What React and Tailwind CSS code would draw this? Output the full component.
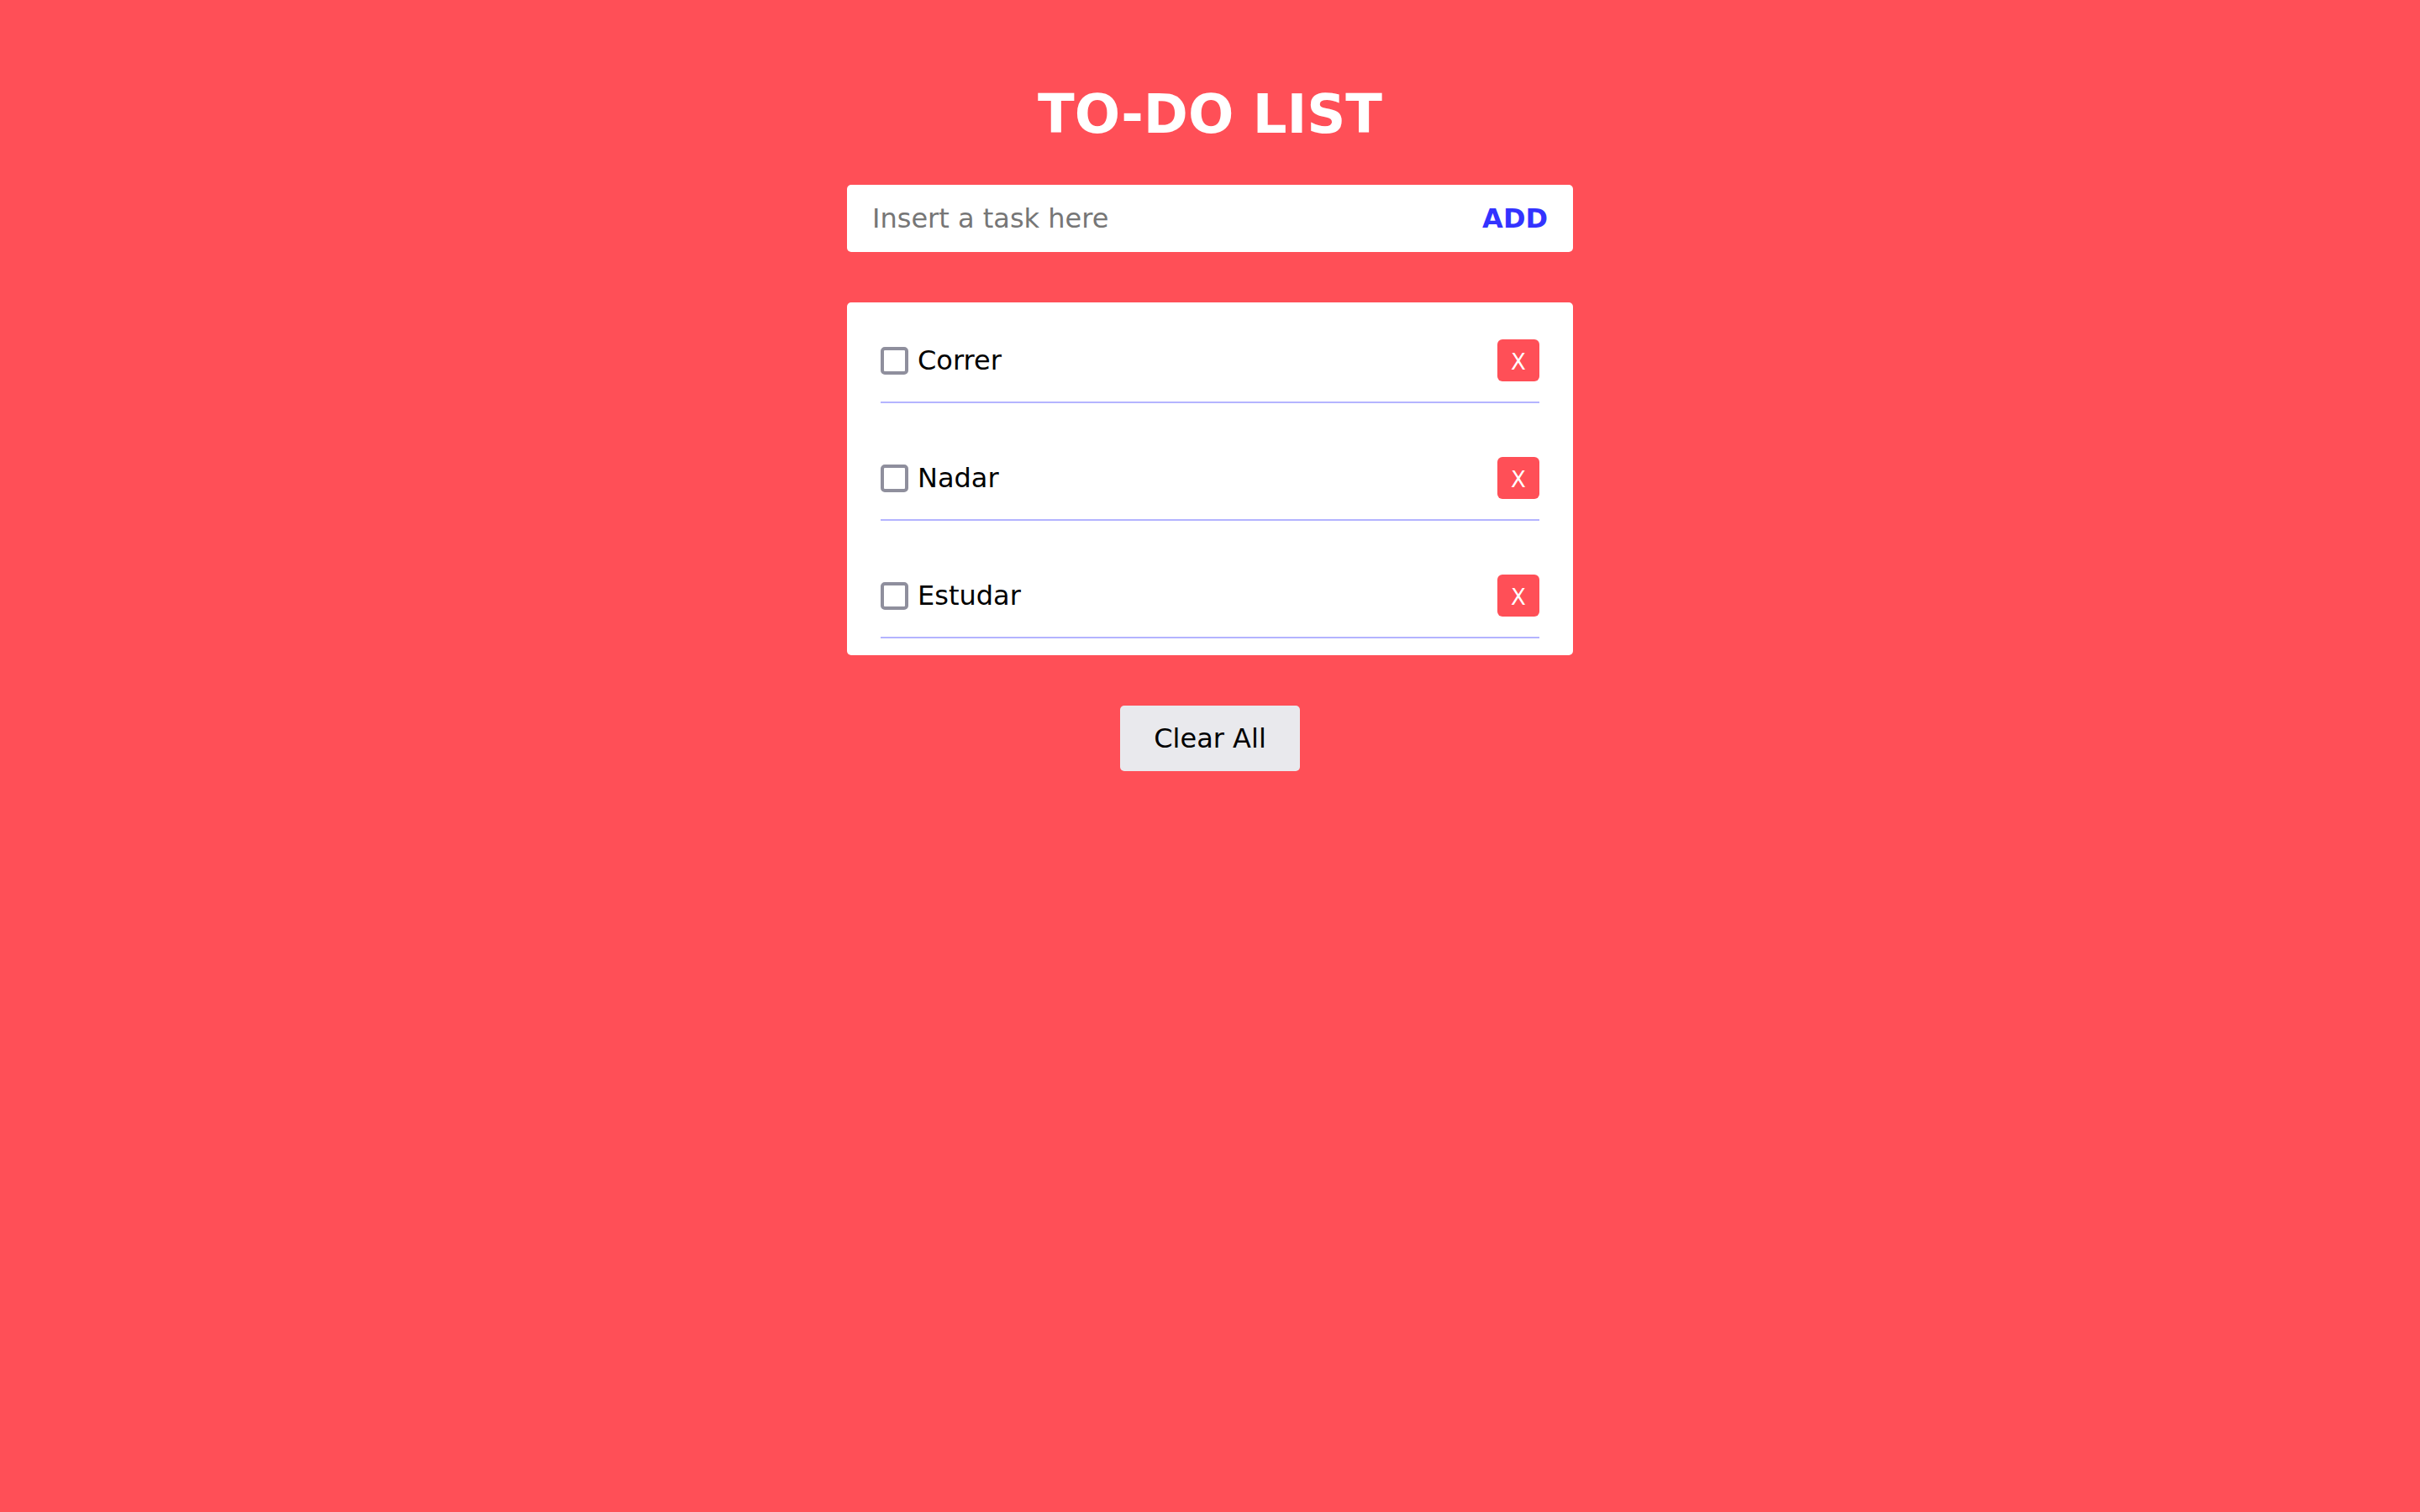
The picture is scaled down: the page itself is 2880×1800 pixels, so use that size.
import React from "react";

const tasks = ["Correr", "Nadar", "Estudar"];

export default function App() {
  return (
    <div className="min-h-screen w-full bg-[#ff4f57] font-['DejaVu_Sans',sans-serif] flex flex-col items-center pt-[99px]">
      <h1 className="text-[64px] leading-[75px] font-bold text-white">TO-DO LIST</h1>

      <div className="mt-[46px] w-[864px] h-[80px] bg-white rounded-[5px] flex items-center px-[30px]">
        <input
          type="text"
          placeholder="Insert a task here"
          className="flex-1 min-w-0 bg-transparent outline-none text-[32px] text-black placeholder:text-[#767676] font-['DejaVu_Sans',sans-serif]"
        />
        <button className="text-[32px] font-bold text-[#3333ff] leading-none">ADD</button>
      </div>

      <ul className="mt-[60px] w-[864px] bg-white rounded-[5px] py-[20px] px-[40px] flex flex-col gap-[40px]">
        {tasks.map((t) => (
          <li key={t} className="flex items-center pt-[24px] pb-[24px] border-b-2 border-[#b4b4ff]">
            <span className="w-[33px] h-[33px] border-[4px] border-[#8f8f9d] rounded-[5px] bg-white shrink-0" />
            <span className="ml-[11px] text-[32px] text-black leading-[50px]">{t}</span>
            <button className="ml-auto w-[50px] h-[50px] rounded-[6px] bg-[#ff4f57] text-white text-[26px] leading-none pt-[3px] flex items-center justify-center">
              X
            </button>
          </li>
        ))}
      </ul>

      <button className="mt-[60px] w-[214px] h-[78px] rounded-[5px] bg-[#e9e9ed] text-[32px] text-black flex items-center justify-center">
        Clear All
      </button>
    </div>
  );
}
